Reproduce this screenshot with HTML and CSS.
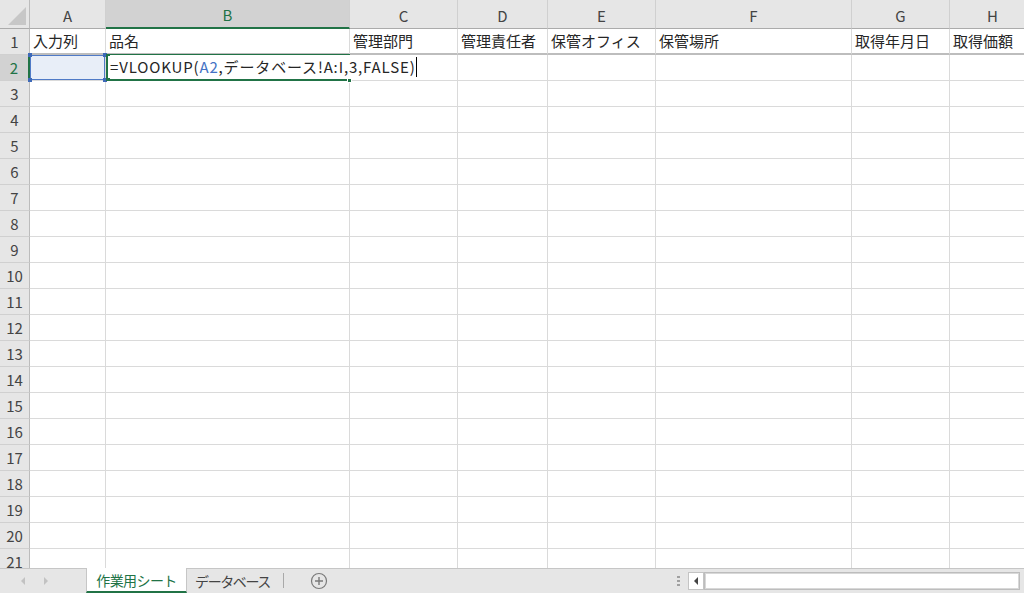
FILE: index.html
```html
<!DOCTYPE html>
<html lang="ja">
<head>
    <meta charset="UTF-8">
    <meta name="viewport" content="width=device-width, initial-scale=1.0">
    <title>作業用シート</title>
    <link rel="stylesheet" href="styles.css">
</head>
<body>

<div id="app">
    <div id="sheet">
        <div class="corner"><span class="corner-tri"></span></div>
        <div class="col-head">A</div>
        <div class="col-head sel">B</div>
        <div class="col-head">C</div>
        <div class="col-head">D</div>
        <div class="col-head">E</div>
        <div class="col-head">F</div>
        <div class="col-head">G</div>
        <div class="col-head">H</div>

        <div class="row-head">1</div>
        <div class="cell title">入力列</div>
        <div class="cell title">品名</div>
        <div class="cell title">管理部門</div>
        <div class="cell title">管理責任者</div>
        <div class="cell title">保管オフィス</div>
        <div class="cell title">保管場所</div>
        <div class="cell title">取得年月日</div>
        <div class="cell title">取得価額</div>

        <div class="row-head sel">2</div>
        <div class="cell ref">
            <i class="h tl"></i><i class="h tr"></i><i class="h bl"></i><i class="h br"></i>
        </div>
        <div class="cell active">
            <span class="formula">=VLOOKUP(<b>A2</b>,データベース!A:I,3,FALSE)<u></u></span>
            <i class="fill"></i>
        </div>
        <div class="cell"></div><div class="cell"></div><div class="cell"></div><div class="cell"></div><div class="cell"></div><div class="cell"></div>

        <div class="row-head">3</div><div class="cell"></div><div class="cell"></div><div class="cell"></div><div class="cell"></div><div class="cell"></div><div class="cell"></div><div class="cell"></div><div class="cell"></div>
        <div class="row-head">4</div><div class="cell"></div><div class="cell"></div><div class="cell"></div><div class="cell"></div><div class="cell"></div><div class="cell"></div><div class="cell"></div><div class="cell"></div>
        <div class="row-head">5</div><div class="cell"></div><div class="cell"></div><div class="cell"></div><div class="cell"></div><div class="cell"></div><div class="cell"></div><div class="cell"></div><div class="cell"></div>
        <div class="row-head">6</div><div class="cell"></div><div class="cell"></div><div class="cell"></div><div class="cell"></div><div class="cell"></div><div class="cell"></div><div class="cell"></div><div class="cell"></div>
        <div class="row-head">7</div><div class="cell"></div><div class="cell"></div><div class="cell"></div><div class="cell"></div><div class="cell"></div><div class="cell"></div><div class="cell"></div><div class="cell"></div>
        <div class="row-head">8</div><div class="cell"></div><div class="cell"></div><div class="cell"></div><div class="cell"></div><div class="cell"></div><div class="cell"></div><div class="cell"></div><div class="cell"></div>
        <div class="row-head">9</div><div class="cell"></div><div class="cell"></div><div class="cell"></div><div class="cell"></div><div class="cell"></div><div class="cell"></div><div class="cell"></div><div class="cell"></div>
        <div class="row-head">10</div><div class="cell"></div><div class="cell"></div><div class="cell"></div><div class="cell"></div><div class="cell"></div><div class="cell"></div><div class="cell"></div><div class="cell"></div>
        <div class="row-head">11</div><div class="cell"></div><div class="cell"></div><div class="cell"></div><div class="cell"></div><div class="cell"></div><div class="cell"></div><div class="cell"></div><div class="cell"></div>
        <div class="row-head">12</div><div class="cell"></div><div class="cell"></div><div class="cell"></div><div class="cell"></div><div class="cell"></div><div class="cell"></div><div class="cell"></div><div class="cell"></div>
        <div class="row-head">13</div><div class="cell"></div><div class="cell"></div><div class="cell"></div><div class="cell"></div><div class="cell"></div><div class="cell"></div><div class="cell"></div><div class="cell"></div>
        <div class="row-head">14</div><div class="cell"></div><div class="cell"></div><div class="cell"></div><div class="cell"></div><div class="cell"></div><div class="cell"></div><div class="cell"></div><div class="cell"></div>
        <div class="row-head">15</div><div class="cell"></div><div class="cell"></div><div class="cell"></div><div class="cell"></div><div class="cell"></div><div class="cell"></div><div class="cell"></div><div class="cell"></div>
        <div class="row-head">16</div><div class="cell"></div><div class="cell"></div><div class="cell"></div><div class="cell"></div><div class="cell"></div><div class="cell"></div><div class="cell"></div><div class="cell"></div>
        <div class="row-head">17</div><div class="cell"></div><div class="cell"></div><div class="cell"></div><div class="cell"></div><div class="cell"></div><div class="cell"></div><div class="cell"></div><div class="cell"></div>
        <div class="row-head">18</div><div class="cell"></div><div class="cell"></div><div class="cell"></div><div class="cell"></div><div class="cell"></div><div class="cell"></div><div class="cell"></div><div class="cell"></div>
        <div class="row-head">19</div><div class="cell"></div><div class="cell"></div><div class="cell"></div><div class="cell"></div><div class="cell"></div><div class="cell"></div><div class="cell"></div><div class="cell"></div>
        <div class="row-head">20</div><div class="cell"></div><div class="cell"></div><div class="cell"></div><div class="cell"></div><div class="cell"></div><div class="cell"></div><div class="cell"></div><div class="cell"></div>
        <div class="row-head">21</div><div class="cell"></div><div class="cell"></div><div class="cell"></div><div class="cell"></div><div class="cell"></div><div class="cell"></div><div class="cell"></div><div class="cell"></div>
    </div>

    <div id="tab-bar">
        <div class="tab-nav">
            <span class="nav-arrow left"></span>
            <span class="nav-arrow right"></span>
        </div>
        <div class="tab active">作業用シート</div>
        <div class="tab">データベース</div>
        <div class="tab-add">
            <svg width="18" height="18" viewBox="0 0 18 18">
                <circle cx="9" cy="9" r="7.5" fill="none" stroke="#7a7a7a" stroke-width="1.2"/>
                <path d="M9 5v8M5 9h8" stroke="#7a7a7a" stroke-width="1.4"/>
            </svg>
        </div>
        <div class="tab-space"></div>
        <div class="split-dots"><i></i><i></i><i></i></div>
        <div class="hscroll">
            <div class="hscroll-btn"><span></span></div>
            <div class="hscroll-track"></div>
        </div>
    </div>
</div>

</body>
</html>
```

FILE: styles.css
```css
body {
    margin: 0;
    font-family: "Noto Sans CJK JP", "Noto Sans", sans-serif;
    color: #262626;
    background-color: #fff;
}

#app {
    display: flex;
    flex-direction: column;
    width: 1024px;
    height: 593px;
    overflow: hidden;
}

#sheet {
    height: 568px;
    width: 1024px;
    overflow: hidden;
    display: grid;
    grid-template-columns: 30px 76px 244px 108px 90px 108px 196px 98px 86px;
    grid-template-rows: 29px;
    grid-auto-rows: 26px;
    flex-shrink: 0;
}

/* headers */
.corner {
    background-color: #e6e6e6;
    border-right: 1px solid #bcbcbc;
    border-bottom: 1px solid #ababab;
    box-sizing: border-box;
    display: flex;
    align-items: flex-end;
    justify-content: flex-end;
    padding: 0 3px 3px 0;
}

.corner-tri {
    width: 0;
    height: 0;
    border-left: 18px solid transparent;
    border-bottom: 18px solid #c7c7c7;
}

.col-head {
    background-color: #e6e6e6;
    border-right: 1px solid #d0d0d0;
    border-bottom: 1px solid #ababab;
    box-sizing: border-box;
    display: flex;
    align-items: center;
    justify-content: center;
    font-size: 15px;
    color: #444;
    padding-top: 2px;
}

.col-head.sel {
    background-color: #d2d2d2;
    color: #217346;
    border-bottom: 2px solid #217346;
}

.row-head {
    background-color: #e6e6e6;
    border-right: 1px solid #bcbcbc;
    border-bottom: 1px solid #d0d0d0;
    box-sizing: border-box;
    display: flex;
    align-items: center;
    justify-content: center;
    font-size: 15px;
    color: #444;
}

.row-head.sel {
    background-color: #d2d2d2;
    color: #217346;
    border-right: 2px solid #217346;
}

/* cells */
.cell {
    border-right: 1px solid #dadada;
    border-bottom: 1px solid #dadada;
    box-sizing: border-box;
    font-size: 15px;
    line-height: 25px;
    padding-left: 3px;
    white-space: nowrap;
}

.cell.title {
    border-bottom: 2px solid #bdbdbd;
    line-height: 24px;
}

.cell.ref {
    position: relative;
    background-color: #e8eef8;
    box-shadow: inset 0 0 0 1px #4f7ac7;
}

.h {
    position: absolute;
    width: 4px;
    height: 4px;
    background-color: #3e69b8;
}
.h.tl { left: -2px; top: -2px; }
.h.tr { right: -2px; top: -2px; }
.h.bl { left: -2px; bottom: -2px; }
.h.br { right: -2px; bottom: -2px; }

.cell.active {
    position: relative;
    z-index: 2;
    box-shadow: inset 0 0 0 2px #217346;
    border-color: #217346;
    margin-top: -1px;
    overflow: visible;
}

.formula {
    position: relative;
    display: inline-block;
    background-color: #fff;
    padding-right: 2px;
    margin-top: 1px;
    margin-left: 1px;
    line-height: 24px;
    letter-spacing: 0.85px;
}

.formula b {
    font-weight: normal;
    color: #4472c4;
}

.formula u {
    display: inline-block;
    width: 1px;
    height: 20px;
    background-color: #000;
    vertical-align: -4px;
    margin-left: 0;
}

.fill {
    position: absolute;
    right: -3px;
    bottom: -3px;
    width: 5px;
    height: 5px;
    background-color: #217346;
    border: 1px solid #fff;
    box-sizing: border-box;
}

/* sheet tabs */
#tab-bar {
    height: 25px;
    flex-shrink: 0;
    display: flex;
    align-items: stretch;
    background-color: #e6e6e6;
    border-top: 1px solid #c6c6c6;
    box-sizing: border-box;
    font-size: 14px;
    line-height: 1;
    white-space: nowrap;
}

.tab-nav {
    width: 86px;
    display: flex;
    align-items: center;
    padding-left: 21px;
    box-sizing: border-box;
    gap: 19px;
}

.nav-arrow {
    width: 0;
    height: 0;
    border-top: 4px solid transparent;
    border-bottom: 4px solid transparent;
}
.nav-arrow.left { border-right: 4px solid #c2c2c2; }
.nav-arrow.right { border-left: 4px solid #c2c2c2; }

.tab {
    display: flex;
    align-items: center;
    justify-content: center;
    color: #444;
    position: relative;
    letter-spacing: -0.6px;
}

.tab.active {
    width: 101px;
    box-sizing: border-box;
    background-color: #fff;
    color: #217346;
    margin-top: -1px;
    padding-top: 1px;
    border-left: 1px solid #c6c6c6;
    border-right: 1px solid #c6c6c6;
    border-bottom: 2px solid #217346;
}

.tab:not(.active) {
    width: 97px;
    box-sizing: border-box;
    padding-right: 6px;
    letter-spacing: -1.4px;
}

.tab:not(.active)::after {
    content: "";
    position: absolute;
    right: 0;
    top: 4px;
    height: 15px;
    border-right: 1px solid #a9a9a9;
}

.tab-add {
    width: 70px;
    display: flex;
    align-items: center;
    justify-content: center;
}

.tab-space {
    flex: 1;
}

.split-dots {
    width: 16px;
    display: flex;
    flex-direction: column;
    align-items: center;
    justify-content: center;
    gap: 2px;
    margin-right: 2px;
}

.split-dots i {
    width: 3px;
    height: 2px;
    background-color: #a0a0a0;
}

.hscroll {
    width: 336px;
    display: flex;
    align-items: center;
    padding: 2px 4px 2px 0;
    box-sizing: border-box;
}

.hscroll-btn {
    width: 16px;
    height: 18px;
    background-color: #fff;
    border: 1px solid #c4c4c4;
    box-sizing: border-box;
    display: flex;
    align-items: center;
    justify-content: center;
}

.hscroll-btn span {
    width: 0;
    height: 0;
    border-top: 4px solid transparent;
    border-bottom: 4px solid transparent;
    border-right: 4px solid #444;
}

.hscroll-track {
    flex: 1;
    height: 18px;
    background-color: #fff;
    border: 1px solid #bdbdbd;
    box-shadow: inset 0 0 0 1px #d8d8d8;
    box-sizing: border-box;
}
```
